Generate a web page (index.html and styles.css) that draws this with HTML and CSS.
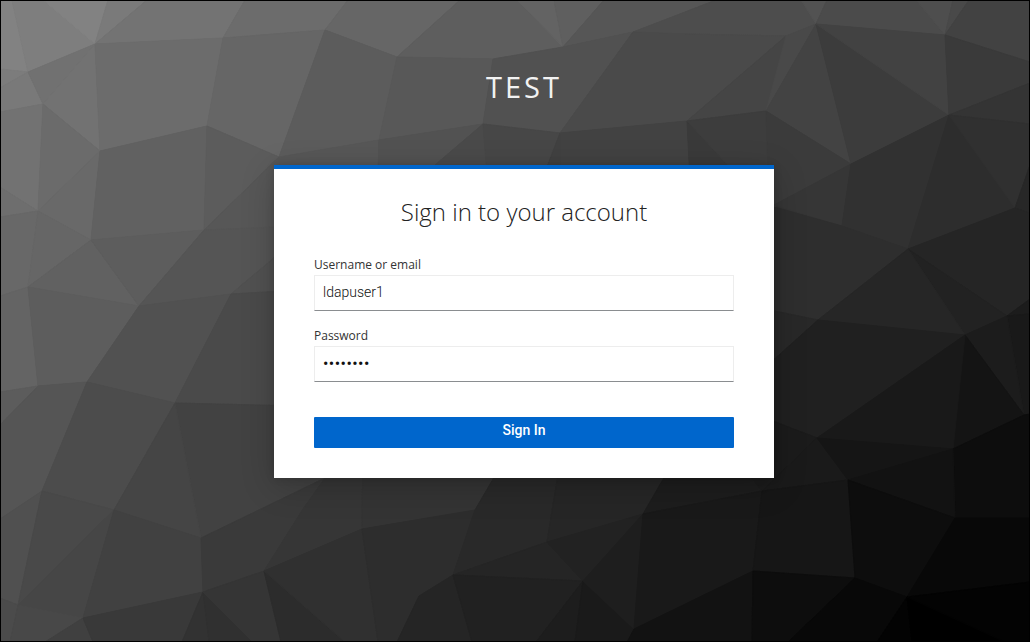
FILE: index.html
```
<!DOCTYPE html>
<html lang="en">
<head>
<meta charset="utf-8">
<title>Sign in to TEST</title>
<link rel="stylesheet" href="styles.css">
</head>
<body>
<svg class="backdrop" viewBox="0 0 1030 642" aria-hidden="true">
<g class="facets">
<polygon color="#828282" points="0,0 12,0 28,72 0,69"/>
<polygon color="#7e7e7e" points="12,0 43,0 95,44 28,72"/>
<polygon color="#828282" points="43,0 108,0 95,44"/>
<polygon color="#7a7a7a" points="108,0 147,0 95,44"/>
<polygon color="#737373" points="147,0 245,0 223,38 95,44"/>
<polygon color="#6c6c6c" points="245,0 348,0 325,30 223,38"/>
<polygon color="#666666" points="348,0 460,0 397,57 325,30"/>
<polygon color="#7c7c7c" points="0,69 28,72 0,88"/>
<polygon color="#797979" points="0,88 28,72 43,104 0,112"/>
<polygon color="#717171" points="28,72 95,44 43,104"/>
<polygon color="#727272" points="95,44 100,151 43,104"/>
<polygon color="#6c6c6c" points="95,44 223,38 207,126 100,151"/>
<polygon color="#666666" points="223,38 325,30 279,157 207,126"/>
<polygon color="#5c5c5c" points="325,30 397,57 379,140 279,157"/>
<polygon color="#5e5e5e" points="460,0 517,0 563,47 493,59 397,57"/>
<polygon color="#636363" points="517,0 554,0 563,47"/>
<polygon color="#5f5f5f" points="554,0 604,0 563,47"/>
<polygon color="#565656" points="604,0 716,0 685,12 633,32 563,47"/>
<polygon color="#585858" points="397,57 493,59 483,124 379,140"/>
<polygon color="#515151" points="493,59 563,47 633,32 560,133 483,124"/>
<polygon color="#4d4d4d" points="716,0 801,0 816,24 786,36 685,34 633,32 685,12"/>
<polygon color="#4a4a4a" points="633,32 685,34 786,36 687,121 560,133"/>
<polygon color="#525252" points="801,0 827,0 816,24"/>
<polygon color="#4b4b4b" points="827,0 916,0 945,35 816,24"/>
<polygon color="#4e4e4e" points="916,0 953,0 945,35"/>
<polygon color="#494949" points="953,0 969,0 945,35"/>
<polygon color="#424242" points="969,0 1030,0 1030,62 945,35"/>
<polygon color="#454545" points="786,36 766,111 687,121"/>
<polygon color="#494949" points="786,36 816,24 766,111"/>
<polygon color="#434343" points="816,24 851,164 766,111"/>
<polygon color="#3c3c3c" points="816,24 949,115 851,164"/>
<polygon color="#424242" points="816,24 945,35 949,115"/>
<polygon color="#3a3a3a" points="945,35 1030,62 1030,83 949,115"/>
<polygon color="#343434" points="1030,83 1030,124 949,115"/>
<polygon color="#727272" points="0,112 43,104 38,211 0,187"/>
<polygon color="#6b6b6b" points="43,104 100,151 38,211"/>
<polygon color="#696969" points="100,151 91,240 38,211"/>
<polygon color="#616161" points="100,151 207,126 204,230 91,240"/>
<polygon color="#5c5c5c" points="207,126 279,157 204,230"/>
<polygon color="#575757" points="279,157 379,140 376,240 204,230"/>
<polygon color="#525252" points="379,140 483,124 435,165 435,240 376,240"/>
<polygon color="#4a4a4a" points="483,124 490,200 420,200 435,165"/>
<polygon color="#474747" points="483,124 560,133 547,165 547,200 489,200"/>
<polygon color="#414141" points="560,133 562,200 535,200"/>
<polygon color="#424242" points="560,133 687,121 691,200 562,200"/>
<polygon color="#3a3a3a" points="687,121 760,200 691,200"/>
<polygon color="#3d3d3d" points="687,121 766,111 770,200 760,200"/>
<polygon color="#3b3b3b" points="766,111 851,164 774,207 769,200"/>
<polygon color="#6e6e6e" points="0,187 38,211 0,217"/>
<polygon color="#686868" points="0,217 38,211 28,287 0,296"/>
<polygon color="#666666" points="38,211 91,240 28,287"/>
<polygon color="#616161" points="91,240 139,306 28,287"/>
<polygon color="#5d5d5d" points="91,240 204,230 139,306"/>
<polygon color="#555555" points="204,230 300,226 300,236 231,294 139,306"/>
<polygon color="#515151" points="300,236 300,290 231,294"/>
<polygon color="#646464" points="0,296 28,287 38,386 0,392"/>
<polygon color="#5d5d5d" points="28,287 139,306 87,382 38,386"/>
<polygon color="#515151" points="139,306 231,294 175,403 87,382"/>
<polygon color="#4a4a4a" points="231,294 300,290 300,406 175,403"/>
<polygon color="#5c5c5c" points="0,392 38,386 0,425"/>
<polygon color="#555555" points="38,386 87,382 42,491 0,519 0,425"/>
<polygon color="#4c4c4c" points="87,382 175,403 114,510 42,491"/>
<polygon color="#424242" points="175,403 201,538 325,478 300,406"/>
<polygon color="#454545" points="175,403 201,538 114,510"/>
<polygon color="#505050" points="0,519 42,491 18,605 0,598"/>
<polygon color="#494949" points="42,491 114,510 18,605"/>
<polygon color="#464646" points="114,510 83,618 18,605"/>
<polygon color="#414141" points="114,510 201,538 203,592 83,618"/>
<polygon color="#3a3a3a" points="201,538 325,478 303,509 264,571 203,592"/>
<polygon color="#4b4b4b" points="0,598 18,605 10,642 0,642"/>
<polygon color="#484848" points="18,605 83,618 45,642 10,642"/>
<polygon color="#404040" points="83,618 93,642 45,642"/>
<polygon color="#393939" points="83,618 203,592 182,642 93,642"/>
<polygon color="#323232" points="203,592 209,642 182,642"/>
<polygon color="#303030" points="203,592 253,642 209,642"/>
<polygon color="#353535" points="203,592 264,571 281,642 253,642"/>
<polygon color="#2c2c2c" points="264,571 345,642 281,642"/>
<polygon color="#363636" points="325,478 325,450 363,450 362,529 264,571 303,509"/>
<polygon color="#303030" points="362,529 378,642 345,642 264,571"/>
<polygon color="#343434" points="363,450 510,450 475,510 362,529"/>
<polygon color="#2d2d2d" points="362,529 475,510 453,575 419,596 397,642 378,642"/>
<polygon color="#292929" points="510,450 562,450 547,542 453,575 475,510"/>
<polygon color="#262626" points="562,450 680,450 643,514 547,542"/>
<polygon color="#252525" points="453,575 547,542 583,581"/>
<polygon color="#222222" points="547,542 643,514 583,581"/>
<polygon color="#252525" points="453,575 472,642 397,642 419,596"/>
<polygon color="#212121" points="453,575 583,581 536,642 472,642"/>
<polygon color="#1d1d1d" points="583,581 575,642 536,642"/>
<polygon color="#1a1a1a" points="583,581 634,629 627,642 575,642"/>
<polygon color="#1e1e1e" points="643,514 634,629 583,581"/>
<polygon color="#1d1d1d" points="680,450 730,450 762,491 643,514"/>
<polygon color="#191919" points="643,514 762,491 753,571 634,629"/>
<polygon color="#121212" points="634,629 753,571 752,642 627,642"/>
<polygon color="#363636" points="851,164 842,226 774,205"/>
<polygon color="#313131" points="851,164 949,115 908,249 842,226"/>
<polygon color="#2d2d2d" points="949,115 1015,208 908,249"/>
<polygon color="#303030" points="949,115 1030,124 1030,165 1015,208"/>
<polygon color="#272727" points="1030,165 1030,213 1015,208"/>
<polygon color="#2e2e2e" points="760,200 774,207 842,226 908,249 818,320 760,308"/>
<polygon color="#252525" points="908,249 1015,208 1030,213 1030,299 1007,316"/>
<polygon color="#222222" points="908,249 1007,316 965,335"/>
<polygon color="#262626" points="908,249 965,335 818,320"/>
<polygon color="#282828" points="760,308 818,320 760,372"/>
<polygon color="#202020" points="818,320 965,335 817,438 760,416 760,372"/>
<polygon color="#1c1c1c" points="1030,299 1030,314 1007,316"/>
<polygon color="#191919" points="1030,314 1030,414 1024,415 1007,316"/>
<polygon color="#1c1c1c" points="965,335 1007,316 1024,415"/>
<polygon color="#141414" points="965,335 1024,415 953,449"/>
<polygon color="#191919" points="965,335 953,449 817,438"/>
<polygon color="#0d0d0d" points="1024,415 1030,414 1030,518 955,518 953,449"/>
<polygon color="#1b1b1b" points="760,416 817,438 762,491 730,450"/>
<polygon color="#1a1a1a" points="817,438 848,480 762,491"/>
<polygon color="#151515" points="817,438 953,449 848,480"/>
<polygon color="#121212" points="848,480 953,449 955,518"/>
<polygon color="#161616" points="762,491 848,480 855,578 753,571"/>
<polygon color="#0d0d0d" points="848,480 955,518 907,597 855,578"/>
<polygon color="#080808" points="955,518 1030,518 1030,582 907,597"/>
<polygon color="#0d0d0d" points="753,571 855,578 788,642 752,642"/>
<polygon color="#080808" points="855,578 907,597 877,642 788,642"/>
<polygon color="#030303" points="907,597 912,642 877,642"/>
<polygon color="#000000" points="907,597 1005,642 912,642"/>
<polygon color="#030303" points="907,597 1030,582 1030,642 1005,642"/>
</g>
</svg>
<main class="login">
<header class="brand">TEST</header>
<section class="card">
<h1 class="title">Sign in to your account</h1>
<form class="form">
<label class="label" for="username">Username or email</label>
<input class="field" id="username" type="text" value="ldapuser1">
<label class="label" for="password">Password</label>
<input class="field field-password" id="password" type="password" value="password">
<button class="submit" type="button">Sign In</button>
</form>
</section>
</main>
</body>
</html>
```
FILE: styles.css
```
* {
  box-sizing: border-box;
}

body {
  margin: 0;
  height: 642px;
  overflow: hidden;
  background: #333;
  font-family: "Open Sans", sans-serif;
  color: #333;
}

.backdrop {
  position: absolute;
  inset: 0;
  width: 1030px;
  height: 642px;
}

.facets polygon {
  fill: currentColor;
  stroke: currentColor;
  stroke-width: 1;
  stroke-linejoin: round;
}

.login {
  position: relative;
  height: 642px;
  border: 1px solid #000;
  display: flex;
  flex-direction: column;
  align-items: center;
  padding-left: 18px;
}

.brand {
  height: 164px;
  padding-top: 66px;
  font-size: 29px;
  line-height: 40px;
  letter-spacing: 3px;
  color: #f2f2f2;
}

.card {
  width: 500px;
  height: 313px;
  padding: 26px 40px 0;
  border-top: 4px solid #06c;
  background: #fff;
  box-shadow: 0 8px 32px rgba(3, 3, 3, 0.2), 0 0 8px rgba(3, 3, 3, 0.14);
}

.title {
  margin: 0 0 32px;
  font-size: 24px;
  line-height: 34px;
  font-weight: 300;
  text-align: center;
  color: #222;
}

.form {
  display: flex;
  flex-direction: column;
}

.label {
  height: 14px;
  font-size: 12px;
  line-height: 8px;
}

.field {
  height: 36px;
  margin: 0 0 21px;
  padding: 0 8px 2px;
  border: 1px solid #ededed;
  border-bottom-color: #8a8d90;
  border-radius: 0;
  background: #fff;
  font-family: Roboto, sans-serif;
  font-size: 14px;
  font-weight: 300;
  color: #111;
  outline: 0;
}

.field-password {
  margin-bottom: 35px;
  padding-bottom: 1px;
  font-size: 16px;
  font-weight: 400;
  letter-spacing: 0.45px;
}

.submit {
  height: 31px;
  padding: 0 0 5px;
  border: 0;
  border-radius: 1px;
  background: #06c;
  font-family: Roboto, sans-serif;
  font-size: 14px;
  font-weight: 500;
  color: #fff;
}
```
